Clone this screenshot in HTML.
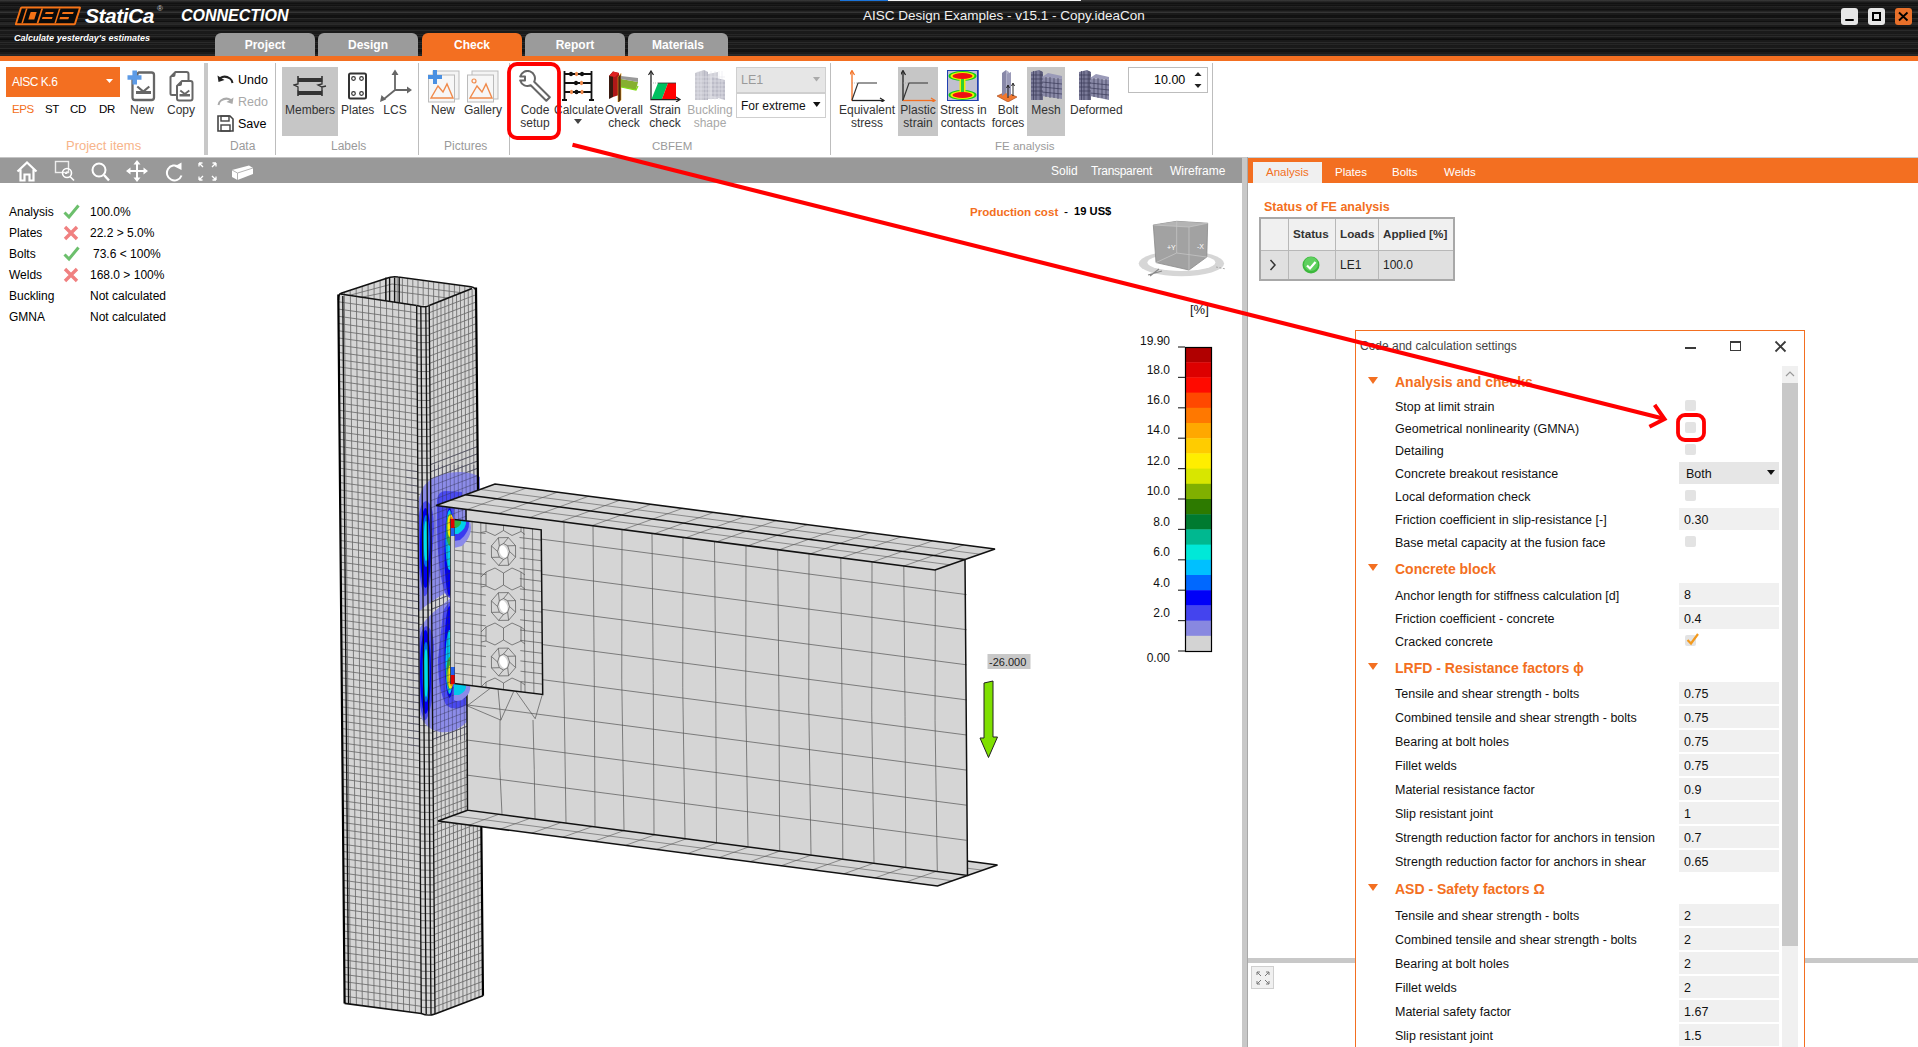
<!DOCTYPE html>
<html><head><meta charset="utf-8">
<style>
*{box-sizing:border-box;margin:0;padding:0}
html,body{width:1918px;height:1047px;overflow:hidden;background:#fff;font-family:"Liberation Sans",sans-serif;color:#000}
.a{position:absolute}
.t{position:absolute;white-space:nowrap;line-height:1}
#title{left:0;top:0;width:1918px;height:56px;background-color:#1a1a1a;
background-image:
repeating-linear-gradient(180deg,rgba(255,255,255,0.07) 0px,rgba(255,255,255,0.07) 1px,rgba(0,0,0,0) 1px,rgba(0,0,0,0) 3px,rgba(0,0,0,0.35) 3px,rgba(0,0,0,0.35) 4px,rgba(0,0,0,0) 4px,rgba(0,0,0,0) 6px),
repeating-linear-gradient(180deg,rgba(255,255,255,0.05) 0px,rgba(255,255,255,0.05) 2px,rgba(0,0,0,0) 2px,rgba(0,0,0,0) 5px,rgba(0,0,0,0.3) 5px,rgba(0,0,0,0.3) 7px,rgba(0,0,0,0) 7px,rgba(0,0,0,0) 11px)}
.tab{position:absolute;top:33px;width:100px;height:23px;background:#9b9b9b;border-radius:6px 6px 0 0;color:#fff;font-weight:bold;font-size:12px;text-align:center;line-height:24px}
.tab.on{background:#f36f21}
.lbl{position:absolute;font-size:12px;color:#333;white-space:nowrap;line-height:12px;text-align:center}
.grp{position:absolute;top:140px;font-size:12px;color:#9a9a9a;white-space:nowrap;line-height:12px}
.sep{position:absolute;top:63px;width:1px;height:92px;background:#bdbdbd}
.hl{position:absolute;top:67px;height:69px;background:#c6c6c6}
.st{position:absolute;font-size:12px;line-height:13px;white-space:nowrap}
.row{position:absolute;left:1395px;font-size:12.5px;line-height:13px;white-space:nowrap;color:#111}
.inp{position:absolute;left:1679px;width:100px;height:22px;background:#f0f0f0;font-size:12.5px;line-height:24px;padding-left:5px;color:#111}
.chk{position:absolute;left:1685px;width:11px;height:11px;background:#e3e3e3;border-radius:2px}
.hdr{position:absolute;left:1395px;font-size:14px;font-weight:bold;color:#f36f21;line-height:14px;white-space:nowrap}
.tri{position:absolute;left:1368px;width:0;height:0;border-left:5px solid transparent;border-right:5px solid transparent;border-top:7px solid #f36f21}
</style></head><body>
<div id="title" class="a"></div>
<div class="a" style="left:840px;top:0;width:48px;height:1px;background:#1a73d9"></div>
<div class="a" style="left:888px;top:0;width:193px;height:1px;background:#f4f4f4"></div>
<!-- logo -->
<svg class="a" style="left:12px;top:4px" width="74" height="24" viewBox="0 0 74 24">
 <g transform="translate(8.4,2.6) skewX(-17.5)">
  <rect x="0" y="0" width="61" height="18.7" rx="1.5" fill="#f47216"/>
  <rect x="2" y="2" width="57" height="14.7" fill="#0a0a0a"/>
  <rect x="6.2" y="2" width="1.6" height="14.7" fill="#f47216"/>
  <rect x="21.5" y="2" width="1.8" height="14.7" fill="#f47216"/>
  <rect x="12" y="5.5" width="6" height="7.5" fill="#f47216"/>
  <rect x="27" y="5.5" width="8" height="2" fill="#f47216"/>
  <rect x="25.5" y="10.5" width="10" height="2" fill="#f47216"/>
  <rect x="39.2" y="2" width="1.6" height="14.7" fill="#f47216"/>
  <rect x="44" y="5.5" width="11" height="2" fill="#f47216"/>
  <rect x="43" y="10.5" width="9" height="2.2" fill="#f47216"/>
 </g>
</svg>
<div class="t" id="statica" style="left:85px;top:5px;font-size:21px;font-weight:bold;font-style:italic;color:#fff;letter-spacing:-0.5px">StatiCa</div>
<div class="t" style="left:157px;top:5px;font-size:8px;color:#ccc">®</div>
<div class="t" id="conn" style="left:181px;top:8px;font-size:16px;font-weight:bold;font-style:italic;color:#fff;transform-origin:0 0;transform:scaleX(1.0)">CONNECTION</div>
<div class="t" id="tag" style="left:14px;top:33px;font-size:9.5px;font-weight:bold;font-style:italic;color:#fff;transform-origin:0 0;transform:scaleX(0.95)">Calculate yesterday's estimates</div>
<div class="t" id="ttl" style="left:863px;top:9px;font-size:13.5px;color:#f0f0f0">AISC Design Examples - v15.1 - Copy.ideaCon</div>
<!-- window buttons -->
<div class="a" style="left:1841px;top:8px;width:17px;height:17px;background:#e6e6e6;border-radius:3px"></div>
<div class="a" style="left:1845px;top:19px;width:9px;height:2px;background:#000;border-radius:1px"></div>
<div class="a" style="left:1868px;top:8px;width:17px;height:17px;background:#e6e6e6;border-radius:3px"></div>
<div class="a" style="left:1872px;top:12px;width:9px;height:9px;border:2px solid #000"></div>
<div class="a" style="left:1895px;top:8px;width:17px;height:17px;background:#e8702a;border-radius:3px"></div>
<svg class="a" style="left:1895px;top:8px" width="17" height="17"><path d="M4 4.5L12.5 12.5M12.5 4.5L4 12.5" stroke="#000" stroke-width="1.8"/></svg>
<!-- tabs -->
<div class="tab" style="left:215px">Project</div>
<div class="tab" style="left:318px">Design</div>
<div class="tab on" style="left:422px">Check</div>
<div class="tab" style="left:525px">Report</div>
<div class="tab" style="left:628px">Materials</div>
<div class="a" style="left:0;top:56px;width:1918px;height:5px;background:#f36f21"></div>
<!-- ribbon bottom strip -->
<div class="a" style="left:0;top:157px;width:1242px;height:26px;background:#999"></div>
<!-- Project items group -->
<div class="a" style="left:6px;top:67px;width:114px;height:30px;background:#f36f21"></div>
<div class="t" style="left:12px;top:76px;font-size:12px;color:#fff;letter-spacing:-0.5px">AISC K.6</div>
<svg class="a" style="left:106px;top:79px" width="8" height="5"><path d="M0 0H7L3.5 4Z" fill="#fff"/></svg>
<div class="t" style="left:12px;top:104px;font-size:11.5px;letter-spacing:-0.4px;color:#f36f21">EPS</div>
<div class="t" style="left:45px;top:104px;font-size:11.5px;letter-spacing:-0.4px">ST</div>
<div class="t" style="left:70px;top:104px;font-size:11.5px;letter-spacing:-0.4px">CD</div>
<div class="t" style="left:99px;top:104px;font-size:11.5px;letter-spacing:-0.4px">DR</div>
<svg class="a" style="left:120px;top:62px" width="40" height="42" viewBox="120 62 40 42">
 <path d="M138.5 72.5H151.5Q154 72.5 154 75V97.5Q154 100 151.5 100H135Q132.5 100 132.5 97.5V78.5Z" fill="none" stroke="#666" stroke-width="2.3" stroke-linejoin="round"/>
 <path d="M132.5 78.5L138.5 72.5V76Q138.5 78.5 136 78.5Z" fill="#666"/>
 <path d="M137.3 86.5L143.3 91.5L149.3 86.5" fill="none" stroke="#666" stroke-width="2.2"/>
 <rect x="136" y="91" width="15" height="3" fill="#666"/>
 <path d="M134.7 70.5V84.5M127.5 77.5H141.5" stroke="#5d9be6" stroke-width="4.6"/>
</svg>
<div class="lbl" style="left:127px;top:104px;width:30px">New</div>
<svg class="a" style="left:165px;top:66px" width="32" height="38" viewBox="165 66 32 38">
 <path d="M175.5 72H186.5Q188.5 72 188.5 74V95H172Q170.5 95 170.5 93.5V77Z" fill="none" stroke="#666" stroke-width="2" stroke-linejoin="round"/>
 <path d="M170.5 77L175.5 72V75Q175.5 77 173.5 77Z" fill="#666"/>
 <path d="M182 81H190.5Q192.5 81 192.5 83V98.5Q192.5 100.5 190.5 100.5H179Q177 100.5 177 98.5V86Z" fill="#fff" stroke="#666" stroke-width="2" stroke-linejoin="round"/>
 <path d="M177 86L182 81V84Q182 86 180 86Z" fill="#666"/>
 <path d="M180.3 90.5L184.8 94L189.3 90.5" fill="none" stroke="#666" stroke-width="1.8"/>
 <rect x="179.5" y="94" width="10.5" height="2.5" fill="#666"/>
</svg>
<div class="lbl" style="left:163px;top:104px;width:36px">Copy</div>
<div class="grp" style="left:66px;color:#f7b48a;font-size:13px">Project items</div>
<div class="a" style="left:204px;top:63px;width:4px;height:92px;background:#c8c8c8"></div>
<!-- Data -->
<svg class="a" style="left:217px;top:74px" width="17" height="12" viewBox="0 0 17 12"><path d="M3 4Q8 1 13 4.5Q15 6 15.5 9" fill="none" stroke="#222" stroke-width="2"/><path d="M0.5 1.5L1.5 8L7.5 6Z" fill="#222"/></svg>
<div class="t" style="left:238px;top:74px;font-size:12.5px">Undo</div>
<svg class="a" style="left:217px;top:96px" width="17" height="12" viewBox="0 0 17 12"><path d="M14 4Q9 1 4 4.5Q2 6 1.5 9" fill="none" stroke="#aaa" stroke-width="2"/><path d="M16.5 1.5L15.5 8L9.5 6Z" fill="#aaa"/></svg>
<div class="t" style="left:238px;top:96px;font-size:12.5px;color:#a8a8a8">Redo</div>
<svg class="a" style="left:217px;top:115px" width="17" height="17" viewBox="0 0 17 17"><path d="M1 1H13L16 4V16H1Z" fill="none" stroke="#444" stroke-width="1.6"/><rect x="4" y="1" width="8" height="5" fill="none" stroke="#444" stroke-width="1.4"/><rect x="4" y="10" width="9" height="6" fill="none" stroke="#444" stroke-width="1.4"/></svg>
<div class="t" style="left:238px;top:118px;font-size:12.5px">Save</div>
<div class="grp" style="left:230px">Data</div>
<div class="sep" style="left:275px"></div>
<!-- Labels -->
<div class="hl" style="left:282px;width:56px"></div>
<svg class="a" style="left:293px;top:75px" width="34" height="22" viewBox="0 0 34 22">
 <rect x="5" y="3" width="24" height="4" fill="#333"/><rect x="5" y="16" width="24" height="4" fill="#333"/>
 <path d="M5 1V7M29 1V7M5 15V21M29 15V21" stroke="#333" stroke-width="1.6"/>
 <path d="M5 7V9L1 10L5 12V15M29 7V9L25 10L29 12L33 11M29 12V15" fill="none" stroke="#333" stroke-width="1.3"/>
</svg>
<div class="lbl" style="left:282px;top:104px;width:56px;color:#333">Members</div>
<svg class="a" style="left:347px;top:72px" width="21" height="28" viewBox="0 0 21 28">
 <rect x="2" y="1.5" width="17" height="25" rx="1.5" fill="none" stroke="#333" stroke-width="2"/>
 <circle cx="6.5" cy="6.5" r="1.8" fill="none" stroke="#333" stroke-width="1.2"/><circle cx="14.5" cy="6.5" r="1.8" fill="none" stroke="#333" stroke-width="1.2"/>
 <circle cx="6.5" cy="21.5" r="1.8" fill="none" stroke="#333" stroke-width="1.2"/><circle cx="14.5" cy="21.5" r="1.8" fill="none" stroke="#333" stroke-width="1.2"/>
</svg>
<div class="lbl" style="left:341px;top:104px;width:32px">Plates</div>
<svg class="a" style="left:378px;top:69px" width="34" height="33" viewBox="0 0 34 33">
 <path d="M17 5V21H30M17 21L6 30" fill="none" stroke="#666" stroke-width="1.8"/>
 <path d="M13.5 6L17 0.5L20.5 6Z M29 17.5L34 21L29 24.5Z M2 33L3.5 26L8 30.5Z" fill="#666"/>
</svg>
<div class="lbl" style="left:380px;top:104px;width:30px">LCS</div>
<div class="grp" style="left:331px">Labels</div>
<div class="sep" style="left:418px"></div>
<!-- Pictures -->
<svg class="a" style="left:427px;top:69px" width="33" height="34" viewBox="0 0 33 34">
 <rect x="6" y="2" width="26" height="28" fill="#f4f4f4" stroke="#bbb" stroke-width="1"/>
 <rect x="1.5" y="6" width="26" height="27" fill="#f7f7f7" stroke="#bbb" stroke-width="1"/>
 <path d="M4 29L11 17L16 23L20 15L26 29Z" fill="none" stroke="#f08a4b" stroke-width="1.4"/>
 <path d="M8 1V15M1 8H15" stroke="#4a90e2" stroke-width="4"/>
</svg>
<div class="lbl" style="left:428px;top:104px;width:30px">New</div>
<svg class="a" style="left:466px;top:69px" width="34" height="34" viewBox="0 0 34 34">
 <rect x="6" y="2" width="26" height="28" fill="#f4f4f4" stroke="#bbb" stroke-width="1"/>
 <rect x="1.5" y="6" width="26" height="27" fill="#f7f7f7" stroke="#bbb" stroke-width="1"/>
 <path d="M4 29L11 17L16 23L20 15L26 29Z" fill="none" stroke="#f08a4b" stroke-width="1.4"/>
 <circle cx="8" cy="12" r="2" fill="none" stroke="#f08a4b" stroke-width="1.2"/>
</svg>
<div class="lbl" style="left:464px;top:104px;width:38px">Gallery</div>
<div class="grp" style="left:444px">Pictures</div>
<div class="sep" style="left:509px"></div>
<!-- CBFEM -->
<svg class="a" style="left:518px;top:70px" width="34" height="33" viewBox="0 0 34 33">
 <path d="M12.7,15.2A7.5,7.5 0 0 1 2.2,10.5L7,10.5L7,6.5L2.2,6.5A7.5,7.5 0 1 1 16.2,11.7L31.8,27.2L28.3,30.8Z" fill="none" stroke="#666" stroke-width="2" stroke-linejoin="round"/>
</svg>
<div class="lbl" style="left:518px;top:104px;width:34px;line-height:12.5px">Code<br>setup</div>
<svg class="a" style="left:562px;top:70px" width="32" height="32" viewBox="0 0 32 32">
 <path d="M2.5 1V30M29.5 1V30M0 30H5M27 30H32M2.5 4H29.5M2.5 13H29.5M2.5 22H29.5" stroke="#111" stroke-width="1.8"/>
 <ellipse cx="9" cy="4" rx="2" ry="2.2" fill="#111"/><ellipse cx="14.5" cy="4" rx="1.5" ry="2.2" fill="#f08a4b"/><ellipse cx="20" cy="4" rx="2" ry="2.2" fill="#111"/>
 <ellipse cx="14" cy="13" rx="2" ry="2.2" fill="#111"/><ellipse cx="19.5" cy="13" rx="1.5" ry="2.2" fill="#f08a4b"/>
 <ellipse cx="9.5" cy="22" rx="1.5" ry="2.2" fill="#f08a4b"/><ellipse cx="14.5" cy="22" rx="2" ry="2.2" fill="#111"/><ellipse cx="20" cy="22" rx="1.5" ry="2.2" fill="#f08a4b"/>
</svg>
<div class="lbl" style="left:553px;top:104px;width:52px">Calculate</div>
<svg class="a" style="left:574px;top:119px" width="8" height="6"><path d="M0 0H8L4 5Z" fill="#444"/></svg>
<svg class="a" style="left:608px;top:70px" width="32" height="32" viewBox="0 0 32 32">
 <path d="M1 6L5 1.5V27L1 29Z" fill="#3a1a10"/>
 <path d="M5 1.5L11 3V25L5 27Z" fill="#b01818"/>
 <path d="M1 6L5 1.5L11 3L7 7Z" fill="#e02020"/>
 <path d="M10 7L13 3.5V30L10 33Z" fill="#4a2a10" stroke="#e8a020" stroke-width="0.6"/>
 <path d="M13 9L30 12L28 20L13 17Z" fill="#86b030"/>
 <path d="M13 6L30 8L30 12L13 9Z" fill="#999"/>
 <path d="M13 17L28 20L30 16" fill="none" stroke="#7fdd10" stroke-width="1.2"/>
</svg>
<div class="lbl" style="left:604px;top:104px;width:40px;line-height:12.5px">Overall<br>check</div>
<svg class="a" style="left:648px;top:70px" width="34" height="32" viewBox="0 0 34 32">
 <path d="M3 2V29.5H31" fill="none" stroke="#222" stroke-width="1.3"/>
 <path d="M0.5 5L3 1L5.5 5M28 27L32 29.5L28 32" fill="none" stroke="#222" stroke-width="1.2"/>
 <path d="M3.5 29L10 13H20L14 29Z" fill="#00c060"/>
 <path d="M14 29L20 13H28L28 29Z" fill="#ff0000"/>
 <path d="M10 13H28" stroke="#333" stroke-width="0.8"/>
 <path d="M3 13H10" stroke="#888" stroke-width="0.6" stroke-dasharray="1 1"/>
</svg>
<div class="lbl" style="left:646px;top:104px;width:38px;line-height:12.5px">Strain<br>check</div>
<svg class="a" style="left:694px;top:69px" width="33" height="32" viewBox="0 0 33 32">
 <path d="M1 4L10 1V31H1Z" fill="#c8c8d0"/>
 <path d="M10 1L14 3V31H10Z" fill="#b8b8c4"/>
 <path d="M14 5L24 3V30H14Z" fill="#d0d0d8"/>
 <path d="M18 8L31 11V31L18 27Z" fill="#bcbcc8"/>
 <g stroke="#e8e8ee" stroke-width="0.6"><path d="M1 8H31M1 12H31M1 16H31M1 20H31M1 24H31M1 28H31M4 2V31M7 2V31M12 2V31M17 2V31M21 2V31M25 2V31M28 2V31"/></g>
</svg>
<div class="lbl" style="left:686px;top:104px;width:48px;line-height:12.5px;color:#a8a8a8">Buckling<br>shape</div>
<div class="a" style="left:736px;top:67px;width:90px;height:26px;background:#e6e6e6;border:1px solid #cfcfcf"></div>
<div class="t" style="left:741px;top:74px;font-size:12.5px;color:#9a9a9a">LE1</div>
<svg class="a" style="left:813px;top:77px" width="8" height="5"><path d="M0 0H7L3.5 4.5Z" fill="#aaa"/></svg>
<div class="a" style="left:736px;top:93px;width:90px;height:25px;background:#fff;border:1px solid #cfcfcf"></div>
<div class="t" style="left:741px;top:100px;font-size:12px;color:#111">For extreme</div>
<svg class="a" style="left:813px;top:102px" width="8" height="6"><path d="M0 0H7.5L3.75 5Z" fill="#111"/></svg>
<div class="grp" style="left:652px;font-size:11.5px">CBFEM</div>
<div class="sep" style="left:830px"></div>
<!-- FE analysis -->
<svg class="a" style="left:850px;top:70px" width="36" height="32" viewBox="0 0 36 32">
 <path d="M2 31V2" stroke="#f36f21" stroke-width="1.3"/><path d="M-0.5 5L2 0.5L4.5 5" fill="none" stroke="#f36f21" stroke-width="1.2"/>
 <path d="M2 30.5H34" stroke="#222" stroke-width="1.3"/><path d="M30 28L34 30.5L30 33" fill="none" stroke="#222" stroke-width="1.2"/>
 <path d="M2 30L8 13H27" fill="none" stroke="#333" stroke-width="1.2"/>
 <path d="M2 13H8" stroke="#999" stroke-width="0.6" stroke-dasharray="1 1"/>
</svg>
<div class="lbl" style="left:837px;top:104px;width:60px;line-height:12.5px">Equivalent<br>stress</div>
<div class="hl" style="left:898px;width:40px"></div>
<svg class="a" style="left:901px;top:70px" width="36" height="32" viewBox="0 0 36 32">
 <path d="M2 31V2" stroke="#222" stroke-width="1.3"/><path d="M-0.5 5L2 0.5L4.5 5" fill="none" stroke="#222" stroke-width="1.2"/>
 <path d="M2 30.5H34" stroke="#f36f21" stroke-width="1.3"/><path d="M30 28L34 30.5L30 33" fill="none" stroke="#f36f21" stroke-width="1.2"/>
 <path d="M2 30L8 13H27" fill="none" stroke="#333" stroke-width="1.2"/>
 <path d="M2 13H8" stroke="#999" stroke-width="0.6" stroke-dasharray="1 1"/>
</svg>
<div class="lbl" style="left:898px;top:104px;width:40px;line-height:12.5px;color:#333">Plastic<br>strain</div>
<svg class="a" style="left:947px;top:70px" width="32" height="31" viewBox="0 0 32 31">
 <rect x="0" y="0" width="31" height="31" fill="#2040b0"/>
 <rect x="1" y="1" width="29" height="29" fill="#c0c0d0"/>
 <ellipse cx="15.5" cy="6" rx="14" ry="5" fill="#10d010"/><ellipse cx="15.5" cy="6" rx="12" ry="4" fill="#f0f000"/><ellipse cx="15.5" cy="6" rx="10" ry="3" fill="#f01010"/>
 <ellipse cx="15.5" cy="25" rx="14" ry="5" fill="#10d010"/><ellipse cx="15.5" cy="25" rx="12" ry="4" fill="#f0f000"/><ellipse cx="15.5" cy="25" rx="10" ry="3" fill="#f01010"/>
 <rect x="12.5" y="9" width="6" height="13" fill="#f0f000"/><rect x="14" y="9" width="3" height="13" fill="#30d030"/>
 <path d="M0 0H31V31H0Z" fill="none" stroke="#2040b0" stroke-width="1.5"/>
</svg>
<div class="lbl" style="left:940px;top:104px;width:46px;line-height:12.5px">Stress in<br>contacts</div>
<svg class="a" style="left:996px;top:69px" width="22" height="33" viewBox="0 0 22 33">
 <path d="M1 27L12 33L21 28L10 23Z" fill="#f07830" stroke="#a04010" stroke-width="0.6"/>
 <path d="M6 4L10 1V24L6 27Z" fill="#8888a8"/><path d="M10 1L13 3V26L10 24Z" fill="#b0b0c8"/>
 <path d="M11 5L15 3V26L11 28Z" fill="#9a9ab8"/>
 <path d="M12 29V17M10.5 19L12 16L13.5 19M17 27V15M15.5 17L17 14L18.5 17" fill="none" stroke="#111" stroke-width="0.9"/>
</svg>
<div class="lbl" style="left:990px;top:104px;width:36px;line-height:12.5px">Bolt<br>forces</div>
<div class="hl" style="left:1027px;width:38px"></div>
<svg class="a" style="left:1030px;top:69px" width="33" height="32" viewBox="0 0 33 32">
 <path d="M1 3L9 1V31H1Z" fill="#7a7a98"/><path d="M9 1L13 3V31H9Z" fill="#6a6a88"/>
 <path d="M12 8L32 10V30L12 27Z" fill="#8a8aa8"/><path d="M12 8L18 4L32 7V10Z" fill="#9a9ab8"/>
 <g stroke="#3a3a58" stroke-width="0.7"><path d="M1 6H13M1 10H13M1 14H13M1 18H13M1 22H13M1 26H13M3.5 2V31M6 2V31M11 2V31M12 13L32 15M12 18L32 20M12 23L32 25M16 8V28M20 8V29M24 9V29M28 9V30"/></g>
</svg>
<div class="lbl" style="left:1027px;top:104px;width:38px;color:#333">Mesh</div>
<svg class="a" style="left:1078px;top:69px" width="33" height="32" viewBox="0 0 33 32">
 <path d="M1 3L9 1V31H1Z" fill="#7a7a98"/><path d="M9 1L13 3V31H9Z" fill="#6a6a88"/>
 <path d="M12 9L31 11V31L12 27Z" fill="#8a8aa8"/><path d="M12 9L18 5L31 8V11Z" fill="#9a9ab8"/>
 <g stroke="#3a3a58" stroke-width="0.7"><path d="M1 6H13M1 10H13M1 14H13M1 18H13M1 22H13M1 26H13M3.5 2V31M6 2V31M11 2V31M12 14L31 16M12 19L31 21M12 24L31 26M16 9V28M20 9V29M24 10V29M28 10V30"/></g>
</svg>
<div class="lbl" style="left:1070px;top:104px;width:48px">Deformed</div>
<div class="a" style="left:1128px;top:67px;width:80px;height:26px;background:#fff;border:1px solid #bdbdbd"></div>
<div class="t" style="left:1154px;top:74px;font-size:12.5px">10.00</div>
<svg class="a" style="left:1194px;top:71px" width="8" height="18"><path d="M0.5 5L4 1L7.5 5Z M0.5 13L4 17L7.5 13Z" fill="#222"/></svg>
<div class="grp" style="left:995px;font-size:11.5px">FE analysis</div>
<div class="sep" style="left:1212px"></div>
<!-- viewport toolbar icons -->
<div class="a" style="left:0;top:157px;width:1242px;height:1px;background:#c4c4c4"></div>
<svg class="a" style="left:16px;top:160px" width="240" height="22" viewBox="0 0 240 22">
 <g fill="none" stroke="#fff" stroke-width="2">
  <path d="M1.5 11.5L11 2.5L20.5 11.5M4.5 9.5V20.5H8.5V14.5H13.5V20.5H17.5V9.5" stroke-width="2.2"/>
  <rect x="39.5" y="1.5" width="13" height="11" stroke-width="1.4" stroke="#eee"/>
  <circle cx="51" cy="13" r="4.5" stroke-width="1.6"/><path d="M54 16.5L58 20.5" stroke-width="1.6"/>
  <path d="M51 11V13.5H49" stroke-width="1"/>
  <circle cx="83" cy="10" r="6.5"/><path d="M88 15L93 20.5" stroke-width="2.4"/>
  <path d="M121 2V20M112 11H130" stroke-width="2"/>
 </g>
 <path d="M121 0L117.5 4.5H124.5Z M121 22L117.5 17.5H124.5Z M110 11L114.5 7.5V14.5Z M132 11L127.5 7.5V14.5Z" fill="#fff"/>
 <path d="M163 7A7.5 7.5 0 1 0 165.5 15.5" fill="none" stroke="#fff" stroke-width="2"/>
 <path d="M158.5 6.5L165.5 2.5L165.5 10Z" fill="#fff"/>
 <g fill="none" stroke="#fff" stroke-width="1.3">
  <path d="M183 3L187 7M183 3V6.5M183 3H186.5"/><path d="M200 3L196 7M200 3V6.5M200 3H196.5"/>
  <path d="M183 20L187 16M183 20V16.5M183 20H186.5"/><path d="M200 20L196 16M200 20V16.5M200 20H196.5"/>
 </g>
 <path d="M216 10L233 5.5L237 8V14L221.5 20L216 17Z" fill="#fff"/>
 <path d="M216 10L221.5 13V20M221.5 13L237 8" fill="none" stroke="#aaa" stroke-width="0.9"/>
</svg>
<div class="t" style="left:1051px;top:165px;font-size:12px;color:#fff">Solid</div>
<div class="t" style="left:1091px;top:165px;font-size:12px;color:#fff;letter-spacing:-0.3px">Transparent</div>
<div class="t" style="left:1170px;top:165px;font-size:12px;color:#fff">Wireframe</div>
<!-- splitter -->
<div class="a" style="left:1242px;top:157px;width:6px;height:890px;background:#c8c8c8;border-right:1px solid #a8a8a8"></div>
<!-- status list -->
<div class="st" style="left:9px;top:206px">Analysis</div>
<div class="st" style="left:9px;top:227px">Plates</div>
<div class="st" style="left:9px;top:248px">Bolts</div>
<div class="st" style="left:9px;top:269px">Welds</div>
<div class="st" style="left:9px;top:290px">Buckling</div>
<div class="st" style="left:9px;top:311px">GMNA</div>
<svg class="a" style="left:63px;top:204px" width="17" height="112" viewBox="0 0 17 112">
 <path d="M1.5 8.5L6 13L15.5 1.5" fill="none" stroke="#6cbf6c" stroke-width="3"/>
 <path d="M2 23L14 35M14 23L2 35" stroke="#f08080" stroke-width="3.4"/>
 <path d="M1.5 50.5L6 55L15.5 43.5" fill="none" stroke="#6cbf6c" stroke-width="3"/>
 <path d="M2 65L14 77M14 65L2 77" stroke="#f08080" stroke-width="3.4"/>
</svg>
<div class="st" style="left:90px;top:206px">100.0%</div>
<div class="st" style="left:90px;top:227px">22.2 &gt; 5.0%</div>
<div class="st" style="left:93px;top:248px">73.6 &lt; 100%</div>
<div class="st" style="left:90px;top:269px">168.0 &gt; 100%</div>
<div class="st" style="left:90px;top:290px">Not calculated</div>
<div class="st" style="left:90px;top:311px">Not calculated</div>
<!-- production cost -->
<div class="t" style="left:970px;top:206px;font-size:11.6px;font-weight:bold;color:#f36f21">Production cost</div>
<div class="t" style="left:1064px;top:206px;font-size:12px">-</div>
<div class="t" style="left:1074px;top:206px;font-size:11.2px;font-weight:bold">19 US$</div>
<!-- nav cube -->
<svg class="a" style="left:1136px;top:218px" width="94" height="62" viewBox="0 0 94 62">
 <ellipse cx="45.4" cy="45.5" rx="42.7" ry="12.7" fill="#d6d6d6"/>
 <ellipse cx="45.4" cy="44.5" rx="34" ry="8.5" fill="#fff"/>
 <path d="M17.3 7L40.7 3.3L71.7 5.2L70.8 39L53 52L20 44.6Z" fill="#a2a2a2" stroke="#8a8a8a" stroke-width="0.8"/>
 <path d="M17.3 7L40.7 3.3L71.7 5.2L53 9Z" fill="#b4b4b4"/>
 <path d="M53 9V52M17.3 7L53 9L71.7 5.2M40.7 3.3V35M20 44.6L40.7 35L70.8 39" fill="none" stroke="#c4c4c4" stroke-width="0.8"/>
 <text x="31" y="32" font-size="7" fill="#fff" font-family="Liberation Sans">+Y</text>
 <text x="61" y="31" font-size="7" fill="#fff" font-family="Liberation Sans">-X</text>
 <path d="M14 58L23 51M12 57L26 53" stroke="#888" stroke-width="1.2"/>
 <path d="M80 49L90 51" stroke="#999" stroke-width="0.8" stroke-dasharray="2 1.5"/>
</svg>
<!-- legend -->
<div class="t" style="left:1190px;top:303px;font-size:13px;color:#111">[%]</div>
<div id="legend"></div>
<svg class="a" style="left:1170px;top:340px" width="50" height="320" viewBox="1170 340 50 320">
<rect x="1185" y="347.00" width="27" height="15.60" fill="#b00000"/>
<rect x="1185" y="362.20" width="27" height="15.60" fill="#dd0000"/>
<rect x="1185" y="377.40" width="27" height="15.60" fill="#ff0a00"/>
<rect x="1185" y="392.60" width="27" height="15.60" fill="#ff4800"/>
<rect x="1185" y="407.80" width="27" height="15.60" fill="#ff7800"/>
<rect x="1185" y="423.00" width="27" height="15.60" fill="#ffa800"/>
<rect x="1185" y="438.20" width="27" height="15.60" fill="#ffcc00"/>
<rect x="1185" y="453.40" width="27" height="15.60" fill="#ffee00"/>
<rect x="1185" y="468.60" width="27" height="15.60" fill="#d8e600"/>
<rect x="1185" y="483.80" width="27" height="15.60" fill="#80b000"/>
<rect x="1185" y="499.00" width="27" height="15.60" fill="#2d7a00"/>
<rect x="1185" y="514.20" width="27" height="15.60" fill="#007a30"/>
<rect x="1185" y="529.40" width="27" height="15.60" fill="#00b890"/>
<rect x="1185" y="544.60" width="27" height="15.60" fill="#00e8d8"/>
<rect x="1185" y="559.80" width="27" height="15.60" fill="#00c0ff"/>
<rect x="1185" y="575.00" width="27" height="15.60" fill="#0068ff"/>
<rect x="1185" y="590.20" width="27" height="15.60" fill="#0000f8"/>
<rect x="1185" y="605.40" width="27" height="15.60" fill="#4444ee"/>
<rect x="1185" y="620.60" width="27" height="15.60" fill="#8888e0"/>
<rect x="1185" y="635.80" width="27" height="15.60" fill="#d3d3d3"/>
<rect x="1185.5" y="347.5" width="26" height="304" fill="none" stroke="#000" stroke-width="1.2"/>
<path d="M1178 347.0H1185" stroke="#333" stroke-width="1.2"/>
<path d="M1178 377.4H1185" stroke="#333" stroke-width="1.2"/>
<path d="M1178 407.8H1185" stroke="#333" stroke-width="1.2"/>
<path d="M1178 438.2H1185" stroke="#333" stroke-width="1.2"/>
<path d="M1178 468.6H1185" stroke="#333" stroke-width="1.2"/>
<path d="M1178 499.0H1185" stroke="#333" stroke-width="1.2"/>
<path d="M1178 529.4H1185" stroke="#333" stroke-width="1.2"/>
<path d="M1178 559.8H1185" stroke="#333" stroke-width="1.2"/>
<path d="M1178 590.2H1185" stroke="#333" stroke-width="1.2"/>
<path d="M1178 620.6H1185" stroke="#333" stroke-width="1.2"/>
<path d="M1178 651.0H1185" stroke="#333" stroke-width="1.2"/>
</svg>
<div class="t" style="left:1100px;width:70px;text-align:right;top:335px;font-size:12px;color:#111">19.90</div>
<div class="t" style="left:1100px;width:70px;text-align:right;top:364px;font-size:12px;color:#111">18.0</div>
<div class="t" style="left:1100px;width:70px;text-align:right;top:394px;font-size:12px;color:#111">16.0</div>
<div class="t" style="left:1100px;width:70px;text-align:right;top:424px;font-size:12px;color:#111">14.0</div>
<div class="t" style="left:1100px;width:70px;text-align:right;top:455px;font-size:12px;color:#111">12.0</div>
<div class="t" style="left:1100px;width:70px;text-align:right;top:485px;font-size:12px;color:#111">10.0</div>
<div class="t" style="left:1100px;width:70px;text-align:right;top:516px;font-size:12px;color:#111">8.0</div>
<div class="t" style="left:1100px;width:70px;text-align:right;top:546px;font-size:12px;color:#111">6.0</div>
<div class="t" style="left:1100px;width:70px;text-align:right;top:577px;font-size:12px;color:#111">4.0</div>
<div class="t" style="left:1100px;width:70px;text-align:right;top:607px;font-size:12px;color:#111">2.0</div>
<div class="t" style="left:1100px;width:70px;text-align:right;top:652px;font-size:12px;color:#111">0.00</div>
<svg class="a" style="left:0;top:183px" width="1242" height="864" viewBox="0 183 1242 864">
<polygon points="338.3,294.6 392.0,277.0 476.0,287.5 429.2,305.5 416.7,305.5" fill="#d5d5d5" stroke="none" stroke-width="0" />
<polygon points="338.3,294.6 416.7,305.5 422.0,306.8 426.0,306.8 429.2,305.5 476.0,287.5 483.0,995.8 435.0,1014.0 430.0,1015.0 425.0,1015.0 421.3,1013.5 344.6,1003.4" fill="#d5d5d5" stroke="none" stroke-width="0" />
<defs><clipPath id="innerclip"><polygon points="338.3,294.6 392,277 476,287.5 429.2,305.5 416.7,305.5"/></clipPath></defs>
<path d="M344.3,292.6L344.3,295.4M350.2,290.7L350.2,296.3M356.2,288.7L356.2,297.1M362.2,286.8L362.2,297.9M368.1,284.8L368.1,298.7M374.1,282.9L374.1,299.6M380.1,280.9L380.1,300.4M386.0,279.0L386.0,301.2M397.2,277.6L397.2,302.8M402.4,278.3L402.4,303.5M407.6,278.9L407.6,304.2M412.8,279.6L412.8,305.0M418.0,280.2L418.0,306.0M423.2,280.9L423.2,306.0M428.4,281.6L428.4,306.0M433.6,282.2L433.6,303.8M438.8,282.9L438.8,301.8M444.0,283.5L444.0,299.8M449.2,284.1L449.2,297.8M454.4,284.8L454.4,295.8M459.6,285.4L459.6,293.8M464.8,286.1L464.8,291.8M470.0,286.8L470.0,289.8M346.3,296.2L392.0,284.0M392.0,284.0L470.0,293.8M346.3,300.4L392.0,291.0M392.0,291.0L470.0,300.8" stroke="#6a6a6a" stroke-width="0.85" fill="none" clip-path="url(#innerclip)"/>
<path d="M338.4,301.8L416.7,312.7M338.4,309.1L416.8,319.9M338.5,316.3L416.8,327.2M338.6,323.5L416.9,334.4M338.6,330.8L416.9,341.6M338.7,338.0L417.0,348.8M338.8,345.2L417.0,356.1M338.8,352.5L417.1,363.3M338.9,359.7L417.1,370.5M338.9,366.9L417.2,377.7M339.0,374.2L417.2,385.0M339.1,381.4L417.3,392.2M339.1,388.6L417.3,399.4M339.2,395.9L417.4,406.6M339.3,403.1L417.4,413.9M339.3,410.3L417.5,421.1M339.4,417.6L417.5,428.3M339.5,424.8L417.5,435.5M339.5,432.0L417.6,442.8M339.6,439.3L417.6,450.0M339.7,446.5L417.7,457.2M339.7,453.7L417.7,464.4M339.8,461.0L417.8,471.7M339.8,468.2L417.8,478.9M339.9,475.4L417.9,486.1M340.0,482.6L417.9,493.3M340.0,489.9L418.0,500.6M340.1,497.1L418.0,507.8M340.2,504.3L418.1,515.0M340.2,511.6L418.1,522.2M340.3,518.8L418.2,529.5M340.4,526.0L418.2,536.7M340.4,533.3L418.2,543.9M340.5,540.5L418.3,551.1M340.6,547.7L418.3,558.4M340.6,555.0L418.4,565.6M340.7,562.2L418.4,572.8M340.7,569.4L418.5,580.0M340.8,576.7L418.5,587.3M340.9,583.9L418.6,594.5M340.9,591.1L418.6,601.7M341.0,598.4L418.7,608.9M341.1,605.6L418.7,616.2M341.1,612.8L418.8,623.4M341.2,620.1L418.8,630.6M341.3,627.3L418.9,637.8M341.3,634.5L418.9,645.1M341.4,641.8L419.0,652.3M341.5,649.0L419.0,659.5M341.5,656.2L419.0,666.7M341.6,663.5L419.1,673.9M341.6,670.7L419.1,681.2M341.7,677.9L419.2,688.4M341.8,685.2L419.2,695.6M341.8,692.4L419.3,702.8M341.9,699.6L419.3,710.1M342.0,706.9L419.4,717.3M342.0,714.1L419.4,724.5M342.1,721.3L419.5,731.7M342.2,728.6L419.5,739.0M342.2,735.8L419.6,746.2M342.3,743.0L419.6,753.4M342.4,750.3L419.7,760.6M342.4,757.5L419.7,767.9M342.5,764.7L419.8,775.1M342.5,772.0L419.8,782.3M342.6,779.2L419.8,789.5M342.7,786.4L419.9,796.8M342.7,793.7L419.9,804.0M342.8,800.9L420.0,811.2M342.9,808.1L420.0,818.4M342.9,815.4L420.1,825.7M343.0,822.6L420.1,832.9M343.1,829.8L420.2,840.1M343.1,837.0L420.2,847.3M343.2,844.3L420.3,854.6M343.2,851.5L420.3,861.8M343.3,858.7L420.4,869.0M343.4,866.0L420.4,876.2M343.4,873.2L420.5,883.5M343.5,880.4L420.5,890.7M343.6,887.7L420.5,897.9M343.6,894.9L420.6,905.1M343.7,902.1L420.6,912.4M343.8,909.4L420.7,919.6M343.8,916.6L420.7,926.8M343.9,923.8L420.8,934.0M344.0,931.1L420.8,941.3M344.0,938.3L420.9,948.5M344.1,945.5L420.9,955.7M344.2,952.8L421.0,962.9M344.2,960.0L421.0,970.2M344.3,967.2L421.1,977.4M344.3,974.5L421.1,984.6M344.4,981.7L421.2,991.8M344.5,988.9L421.2,999.1M344.5,996.2L421.3,1006.3M416.7,313.7L429.3,313.7M416.8,320.9L429.3,321.0M416.8,328.2L429.4,328.2M416.9,335.4L429.4,335.4M416.9,342.6L429.5,342.6M417.0,349.8L429.6,349.9M417.0,357.1L429.6,357.1M417.1,364.3L429.7,364.3M417.1,371.5L429.7,371.6M417.2,378.7L429.8,378.8M417.2,386.0L429.9,386.0M417.3,393.2L429.9,393.3M417.3,400.4L430.0,400.5M417.4,407.6L430.0,407.7M417.4,414.9L430.1,414.9M417.5,422.1L430.1,422.2M417.5,429.3L430.2,429.4M417.5,436.5L430.3,436.6M417.6,443.8L430.3,443.9M417.6,451.0L430.4,451.1M417.7,458.2L430.4,458.3M417.7,465.4L430.5,465.6M417.8,472.7L430.6,472.8M417.8,479.9L430.6,480.0M417.9,487.1L430.7,487.2M417.9,494.3L430.7,494.5M418.0,501.6L430.8,501.7M418.0,508.8L430.9,508.9M418.1,516.0L430.9,516.2M418.1,523.2L431.0,523.4M418.2,530.5L431.0,530.6M418.2,537.7L431.1,537.8M418.2,544.9L431.2,545.1M418.3,552.1L431.2,552.3M418.3,559.4L431.3,559.5M418.4,566.6L431.3,566.8M418.4,573.8L431.4,574.0M418.5,581.0L431.4,581.2M418.5,588.3L431.5,588.5M418.6,595.5L431.6,595.7M418.6,602.7L431.6,602.9M418.7,609.9L431.7,610.1M418.7,617.2L431.7,617.4M418.8,624.4L431.8,624.6M418.8,631.6L431.9,631.8M418.9,638.8L431.9,639.1M418.9,646.1L432.0,646.3M419.0,653.3L432.0,653.5M419.0,660.5L432.1,660.8M419.0,667.7L432.2,668.0M419.1,674.9L432.2,675.2M419.1,682.2L432.3,682.4M419.2,689.4L432.3,689.7M419.2,696.6L432.4,696.9M419.3,703.8L432.5,704.1M419.3,711.1L432.5,711.4M419.4,718.3L432.6,718.6M419.4,725.5L432.6,725.8M419.5,732.7L432.7,733.0M419.5,740.0L432.8,740.3M419.6,747.2L432.8,747.5M419.6,754.4L432.9,754.7M419.7,761.6L432.9,762.0M419.7,768.9L433.0,769.2M419.8,776.1L433.0,776.4M419.8,783.3L433.1,783.7M419.8,790.5L433.2,790.9M419.9,797.8L433.2,798.1M419.9,805.0L433.3,805.3M420.0,812.2L433.3,812.6M420.0,819.4L433.4,819.8M420.1,826.7L433.5,827.0M420.1,833.9L433.5,834.3M420.2,841.1L433.6,841.5M420.2,848.3L433.6,848.7M420.3,855.6L433.7,855.9M420.3,862.8L433.8,863.2M420.4,870.0L433.8,870.4M420.4,877.2L433.9,877.6M420.5,884.5L433.9,884.9M420.5,891.7L434.0,892.1M420.5,898.9L434.1,899.3M420.6,906.1L434.1,906.6M420.6,913.4L434.2,913.8M420.7,920.6L434.2,921.0M420.7,927.8L434.3,928.2M420.8,935.0L434.3,935.5M420.8,942.3L434.4,942.7M420.9,949.5L434.5,949.9M420.9,956.7L434.5,957.2M421.0,963.9L434.6,964.4M421.0,971.2L434.6,971.6M421.1,978.4L434.7,978.9M421.1,985.6L434.8,986.1M421.2,992.8L434.8,993.3M421.2,1000.1L434.9,1000.5M421.3,1007.3L434.9,1007.8M344.3,295.4L350.5,1004.2M350.4,296.3L356.4,1005.0M356.4,297.1L362.3,1005.7M362.4,298.0L368.2,1006.5M368.5,298.8L374.1,1007.3M374.5,299.6L380.0,1008.1M380.5,300.5L385.9,1008.8M386.5,301.3L391.8,1009.6M392.6,302.1L397.7,1010.4M398.6,303.0L403.6,1011.2M404.6,303.8L409.5,1011.9M410.7,304.7L415.4,1012.7M429.3,312.7L476.1,294.7M429.3,320.0L476.1,302.0M429.4,327.2L476.2,309.2M429.4,334.4L476.3,316.4M429.5,341.6L476.4,323.6M429.6,348.9L476.4,330.9M429.6,356.1L476.5,338.1M429.7,363.3L476.6,345.3M429.7,370.6L476.6,352.5M429.8,377.8L476.7,359.8M429.9,385.0L476.8,367.0M429.9,392.3L476.9,374.2M430.0,399.5L476.9,381.5M430.0,406.7L477.0,388.7M430.1,413.9L477.1,395.9M430.1,421.2L477.1,403.1M430.2,428.4L477.2,410.4M430.3,435.6L477.3,417.6M430.3,442.9L477.4,424.8M430.4,450.1L477.4,432.1M430.4,457.3L477.5,439.3M430.5,464.6L477.6,446.5M430.6,471.8L477.6,453.7M430.6,479.0L477.7,461.0M430.7,486.2L477.8,468.2M430.7,493.5L477.9,475.4M430.8,500.7L477.9,482.6M430.9,507.9L478.0,489.9M430.9,515.2L478.1,497.1M431.0,522.4L478.1,504.3M431.0,529.6L478.2,511.6M431.1,536.8L478.3,518.8M431.2,544.1L478.4,526.0M431.2,551.3L478.4,533.2M431.3,558.5L478.5,540.5M431.3,565.8L478.6,547.7M431.4,573.0L478.6,554.9M431.4,580.2L478.7,562.1M431.5,587.5L478.8,569.4M431.6,594.7L478.9,576.6M431.6,601.9L478.9,583.8M431.7,609.1L479.0,591.1M431.7,616.4L479.1,598.3M431.8,623.6L479.1,605.5M431.9,630.8L479.2,612.7M431.9,638.1L479.3,620.0M432.0,645.3L479.4,627.2M432.0,652.5L479.4,634.4M432.1,659.8L479.5,641.6M432.2,667.0L479.6,648.9M432.2,674.2L479.6,656.1M432.3,681.4L479.7,663.3M432.3,688.7L479.8,670.6M432.4,695.9L479.9,677.8M432.5,703.1L479.9,685.0M432.5,710.4L480.0,692.2M432.6,717.6L480.1,699.5M432.6,724.8L480.1,706.7M432.7,732.0L480.2,713.9M432.8,739.3L480.3,721.2M432.8,746.5L480.4,728.4M432.9,753.7L480.4,735.6M432.9,761.0L480.5,742.8M433.0,768.2L480.6,750.1M433.0,775.4L480.6,757.3M433.1,782.7L480.7,764.5M433.2,789.9L480.8,771.7M433.2,797.1L480.9,779.0M433.3,804.3L480.9,786.2M433.3,811.6L481.0,793.4M433.4,818.8L481.1,800.7M433.5,826.0L481.1,807.9M433.5,833.3L481.2,815.1M433.6,840.5L481.3,822.3M433.6,847.7L481.4,829.6M433.7,854.9L481.4,836.8M433.8,862.2L481.5,844.0M433.8,869.4L481.6,851.2M433.9,876.6L481.6,858.5M433.9,883.9L481.7,865.7M434.0,891.1L481.8,872.9M434.1,898.3L481.9,880.2M434.1,905.6L481.9,887.4M434.2,912.8L482.0,894.6M434.2,920.0L482.1,901.8M434.3,927.2L482.1,909.1M434.3,934.5L482.2,916.3M434.4,941.7L482.3,923.5M434.5,948.9L482.4,930.8M434.5,956.2L482.4,938.0M434.6,963.4L482.5,945.2M434.6,970.6L482.6,952.4M434.7,977.9L482.6,959.7M434.8,985.1L482.7,966.9M434.8,992.3L482.8,974.1M434.9,999.5L482.9,981.3M434.9,1006.8L482.9,988.6M433.1,304.0L439.0,1012.5M437.0,302.5L443.0,1011.0M440.9,301.0L447.0,1009.5M444.8,299.5L451.0,1007.9M448.7,298.0L455.0,1006.4M452.6,296.5L459.0,1004.9M456.5,295.0L463.0,1003.4M460.4,293.5L467.0,1001.9M464.3,292.0L471.0,1000.3M468.2,290.5L475.0,998.8M472.1,289.0L479.0,997.3" stroke="#6a6a6a" stroke-width="0.85" fill="none"/>
<defs><clipPath id="colclip"><polygon points="418,300 478,280 485,1000 421,1010"/></clipPath></defs>

<g clip-path="url(#colclip)">
<path d="M418.4,612 L418.4,505 Q419,488 430,480 Q445,471 462,472 Q474,473 480,477 L480,540 L455,560 L453,588 Q444,594 434,600 Q425,606 418.4,612Z" fill="#8c8ce8"/>
<path d="M418.4,630 Q426,618 436,610 Q446,602 453,596 L456,690 L467,693 L467,722 Q455,734 440,732 Q420,728 418.4,705Z" fill="#8c8ce8"/>
<path d="M418.4,530 Q418,503 426,501 Q434,503 434,530 L431,575 Q428,598 424,596 Q419,580 418.4,555Z" fill="#4a4af0"/>
<path d="M418.4,660 Q418,630 426,626 Q434,628 434,650 L432,700 Q428,722 424,720 Q418,705 418.4,685Z" fill="#4a4af0"/>
<path d="M437,500 Q438,491 446,491 L462,492 L462,497 L454,500 L454,598 Q447,600 444,590 Q437,565 437,520Z" fill="#4a4af0"/>
<path d="M443,612 Q447,602 454,600 L454,690 L466,690 L466,705 Q455,712 446,705 Q438,690 438,660Z" fill="#4a4af0"/>
<ellipse cx="425.5" cy="548" rx="5.5" ry="40" fill="#0000f0"/>
<ellipse cx="425.5" cy="672" rx="5.5" ry="42" fill="#0000f0"/>
<ellipse cx="449.5" cy="552" rx="5" ry="44" fill="#0000f0"/>
<ellipse cx="449.5" cy="652" rx="5" ry="46" fill="#0000f0"/>
<ellipse cx="426" cy="541" rx="3.6" ry="26" fill="#0070f0"/>
<ellipse cx="426" cy="672" rx="3.6" ry="30" fill="#0070f0"/>
<ellipse cx="426" cy="541" rx="2.3" ry="20" fill="#00e0e8"/>
<ellipse cx="426" cy="673" rx="2.3" ry="24" fill="#00e0e8"/>
<ellipse cx="449.5" cy="540" rx="4" ry="30" fill="#00c8f0"/>
<ellipse cx="449.5" cy="662" rx="4" ry="32" fill="#00c8f0"/>
<ellipse cx="450" cy="530" rx="3.8" ry="16" fill="#38b040"/>
<ellipse cx="450" cy="673" rx="3.8" ry="16" fill="#38b040"/>
<ellipse cx="450.5" cy="526" rx="3.2" ry="12" fill="#f8e800"/>
<ellipse cx="450.5" cy="677" rx="3.2" ry="12" fill="#f8e800"/>
<ellipse cx="451.5" cy="522" rx="2.2" ry="5" fill="#ff9000"/>
<ellipse cx="451.5" cy="681" rx="2.2" ry="5" fill="#ff9000"/>
</g>

<path d="M430.5,464.6L477.6,446.5M430.6,471.8L477.6,453.7M430.6,479.0L477.7,461.0M430.7,486.2L477.8,468.2M430.7,493.5L477.9,475.4M430.8,500.7L477.9,482.6M430.9,507.9L478.0,489.9M430.9,515.2L478.1,497.1M431.0,522.4L478.1,504.3M431.0,529.6L478.2,511.6M431.1,536.8L478.3,518.8M431.2,544.1L478.4,526.0M431.2,551.3L478.4,533.2M431.3,558.5L478.5,540.5M431.3,565.8L478.6,547.7M431.4,573.0L478.6,554.9M431.4,580.2L478.7,562.1M431.5,587.5L478.8,569.4M431.6,594.7L478.9,576.6M431.6,601.9L478.9,583.8M431.7,609.1L479.0,591.1M431.7,616.4L479.1,598.3M431.8,623.6L479.1,605.5M431.9,630.8L479.2,612.7M431.9,638.1L479.3,620.0M432.0,645.3L479.4,627.2M432.0,652.5L479.4,634.4M432.1,659.8L479.5,641.6M432.2,667.0L479.6,648.9M432.2,674.2L479.6,656.1M432.3,681.4L479.7,663.3M432.3,688.7L479.8,670.6M432.4,695.9L479.9,677.8M432.5,703.1L479.9,685.0M432.5,710.4L480.0,692.2M432.6,717.6L480.1,699.5M432.6,724.8L480.1,706.7M432.7,732.0L480.2,713.9M432.8,739.3L480.3,721.2M434.4,465.0L436.7,740.0M438.4,465.0L440.7,740.0M442.3,465.0L444.7,740.0M446.2,465.0L448.7,740.0M450.2,465.0L452.6,740.0M454.1,465.0L456.6,740.0M458.1,465.0L460.6,740.0M462.0,465.0L464.6,740.0M465.9,465.0L468.5,740.0M469.9,465.0L472.5,740.0M473.8,465.0L476.5,740.0M406.1,470.1L417.8,471.7M406.1,477.3L417.8,478.9M406.2,484.5L417.9,486.1M406.2,491.7L417.9,493.3M406.3,499.0L418.0,500.6M406.3,506.2L418.0,507.8M406.4,513.4L418.1,515.0M406.4,520.6L418.1,522.2M406.5,527.9L418.2,529.5M406.5,535.1L418.2,536.7M406.6,542.3L418.2,543.9M406.6,549.5L418.3,551.1M406.7,556.8L418.3,558.4M406.7,564.0L418.4,565.6M406.8,571.2L418.4,572.8M406.8,578.4L418.5,580.0M406.9,585.7L418.5,587.3M406.9,592.9L418.6,594.5M407.0,600.1L418.6,601.7M407.0,607.3L418.7,608.9M407.1,614.6L418.7,616.2M407.1,621.8L418.8,623.4M407.2,629.0L418.8,630.6M407.2,636.2L418.9,637.8M407.3,643.5L418.9,645.1M407.3,650.7L419.0,652.3M407.4,657.9L419.0,659.5M407.4,665.2L419.0,666.7M407.5,672.4L419.1,673.9M407.5,679.6L419.1,681.2M407.6,686.8L419.2,688.4M407.6,694.1L419.2,695.6M407.7,701.3L419.3,702.8M407.7,708.5L419.3,710.1M407.8,715.7L419.4,717.3M407.8,723.0L419.4,724.5M407.9,730.2L419.5,731.7M407.9,737.4L419.5,739.0M408.0,744.6L419.6,746.2" stroke="#303050" stroke-width="0.6" fill="none" opacity="0.7"/>
<path d="M340.5,294.0L416.7,305.5M429.2,305.5L472.0,288.5M341.0,293.3L386.0,278.5M398.0,277.0L471.0,286.8M338.5,300Q338.5,294 341,293.3M386,278.5Q392,276 398,277M471,286.8Q476,287.5 476.3,292M344.6,1003.4L421.3,1013.5M435.0,1014.0L483.0,995.8" stroke="#111" stroke-width="1.6" fill="none"/>
<path d="M338.3,294.6L344.6,1003.4M476.0,287.5L483.0,995.8" stroke="#000" stroke-width="2.2" fill="none"/>
<path d="M416.7,305.5Q426,308 429.2,305.5M421.3,1013.5Q428,1016.5 435.0,1014.0" stroke="#111" stroke-width="1.4" fill="none"/>
<path d="M416.7,306.0L421.3,1014.0M420.8,306.0L426.2,1014.0M425.8,306.0L431.0,1014.0M429.2,306.0L435.0,1014.0M342.8,296.0L348.6,1004.0M385.8,277.5L385.8,300.7M389.6,277.5L389.6,301.2M394.6,277.5L394.6,301.9M399.2,277.5L399.2,302.6" stroke="#111" stroke-width="1.35" fill="none"/>
<polygon points="438.0,821.0 497.0,799.5 997.5,865.0 937.5,886.0" fill="#d5d5d5" stroke="none" stroke-width="0" />
<path d="M452.8,815.6L952.5,880.8M482.2,804.9L982.5,870.2M469.2,825.1L528.3,803.6M500.4,829.1L559.6,807.7M531.7,833.2L590.8,811.8M562.9,837.2L622.1,815.9M594.1,841.3L653.4,820.0M625.3,845.4L684.7,824.1M656.5,849.4L716.0,828.2M687.8,853.5L747.2,832.2M719.0,857.6L778.5,836.3M750.2,861.6L809.8,840.4M781.4,865.7L841.1,844.5M812.6,869.8L872.4,848.6M843.8,873.8L903.7,852.7M875.1,877.9L934.9,856.8M906.3,881.9L966.2,860.9" stroke="#555" stroke-width="0.6" fill="none"/>
<polygon points="438.0,821.0 497.0,799.5 997.5,865.0 937.5,886.0" fill="none" stroke="#111" stroke-width="1.5" />
<polygon points="466.0,509.3 935.0,570.0 965.0,559.5 967.5,875.5 467.5,810.2" fill="#d5d5d5" stroke="none" stroke-width="0" />
<path d="M500.0,720.0Q498.5,767.2 502.0,814.5M533.0,720.0Q534.5,769.4 535.0,818.8M564.0,521.9Q562.5,672.4 566.0,822.8M593.0,525.6Q594.5,676.1 595.0,826.6M622.0,529.4Q620.5,679.9 624.0,830.4M652.0,533.2Q653.5,683.8 654.0,834.3M683.0,537.2Q681.5,687.8 685.0,838.4M714.5,541.2Q716.0,691.9 716.5,842.5M746.0,545.3Q744.5,695.9 748.0,846.6M777.7,549.3Q779.2,700.0 779.7,850.7M809.0,553.4Q807.5,704.1 811.0,854.8M840.8,557.4Q842.3,708.2 842.8,859.0M872.0,561.4Q870.5,712.2 874.0,863.0M903.8,565.5Q905.3,716.4 905.8,867.2M935.3,569.6Q933.8,720.4 937.3,871.3M466.0,775.0L966.5,840.3M466.0,739.9L966.5,805.2M466.0,704.8L966.5,770.1M466.0,669.7L966.5,735.0M466.0,634.6L966.5,699.9M466.0,599.5L966.5,664.8M466.0,564.4L966.5,629.7M466.0,529.3L966.5,594.6M467.2,705.8L490.8,687.9M467.2,705.8L500.8,720.1M498.0,688.6L500.8,720.1M500.8,720.1L513.7,691.5M516.0,691.5L535.2,718.7M535.2,718.7L542.4,694.3" stroke="#555" stroke-width="0.7" fill="none"/>
<path d="M466.0,509.3L467.5,810.2L967.5,875.5L965.0,559.5" stroke="#111" stroke-width="1.5" fill="none"/>
<polygon points="454.3,519.5 541.2,529.8 542.7,694.5 454.3,683.5" fill="#d5d5d5" stroke="none" stroke-width="0" />
<clipPath id="plateclip"><polygon points="454.3,519.5 541.2,529.8 542.7,694.5 454.3,683.5"/></clipPath>
<path d="M463.0,520.5L463.1,684.6M472.1,521.6L472.4,685.8M480.8,522.6L481.3,686.9M523.8,527.7L525.0,692.3M532.5,528.8L533.9,693.4M454.3,529.8L485.6,533.5M519.5,537.5L541.3,540.1M454.3,540.0L485.7,543.7M519.6,547.8L541.4,550.4M454.3,550.2L485.7,554.0M519.7,558.1L541.5,560.7M454.3,560.5L485.7,564.3M519.8,568.4L541.6,571.0M454.3,570.8L485.8,574.5M519.8,578.6L541.7,581.3M454.3,581.0L485.8,584.8M519.9,588.9L541.8,591.6M454.3,591.2L485.8,595.1M520.0,599.2L541.9,601.9M454.3,601.5L485.9,605.3M520.0,609.5L542.0,612.1M454.3,611.8L485.9,615.6M520.1,619.8L542.0,622.4M454.3,622.0L485.9,625.9M520.2,630.1L542.1,632.7M454.3,632.2L486.0,636.1M520.2,640.3L542.2,643.0M454.3,642.5L486.0,646.4M520.3,650.6L542.3,653.3M454.3,652.8L486.0,656.7M520.4,660.9L542.4,663.6M454.3,663.0L486.1,666.9M520.5,671.2L542.5,673.9M454.3,673.2L486.1,677.2M520.5,681.5L542.6,684.2M509.5,551.5L507.7,557.2L503.5,559.5L499.3,557.2L497.5,551.5L499.3,545.8L503.5,543.5L507.7,545.8ZM515.6,557.1L508.6,565.3L498.6,565.4L491.5,557.4L491.4,545.9L498.4,537.7L508.4,537.6L515.5,545.6ZM509.5,551.5L515.6,557.1M507.7,557.2L508.6,565.3M503.5,559.5L498.6,565.4M499.3,557.2L491.5,557.4M497.5,551.5L491.4,545.9M499.3,545.8L498.4,537.7M503.5,543.5L508.4,537.6M507.7,545.8L515.5,545.6M509.5,606.5L507.7,612.2L503.5,614.5L499.3,612.2L497.5,606.5L499.3,600.8L503.5,598.5L507.7,600.8ZM515.6,612.1L508.6,620.3L498.6,620.4L491.5,612.4L491.4,600.9L498.4,592.7L508.4,592.6L515.5,600.6ZM509.5,606.5L515.6,612.1M507.7,612.2L508.6,620.3M503.5,614.5L498.6,620.4M499.3,612.2L491.5,612.4M497.5,606.5L491.4,600.9M499.3,600.8L498.4,592.7M503.5,598.5L508.4,592.6M507.7,600.8L515.5,600.6M509.5,662.0L507.7,667.7L503.5,670.0L499.3,667.7L497.5,662.0L499.3,656.3L503.5,654.0L507.7,656.3ZM515.6,667.6L508.6,675.8L498.6,675.9L491.5,667.9L491.4,656.4L498.4,648.2L508.4,648.1L515.5,656.1ZM509.5,662.0L515.6,667.6M507.7,667.7L508.6,675.8M503.5,670.0L498.6,675.9M499.3,667.7L491.5,667.9M497.5,662.0L491.4,656.4M499.3,656.3L498.4,648.2M503.5,654.0L508.4,648.1M507.7,656.3L515.5,656.1M486.0,517.5L495.0,513.5L503.5,518.5L512.0,513.5L521.0,517.5L521.0,531.5L512.0,535.5L503.5,530.5L495.0,535.5L486.0,531.5ZM503.5,518.5L503.5,530.5M481.0,522.5L486.0,517.5M481.0,532.5L486.0,531.5M521.0,517.5L525.0,520.5M521.0,531.5L525.0,534.5M486.0,572.0L495.0,568.0L503.5,573.0L512.0,568.0L521.0,572.0L521.0,586.0L512.0,590.0L503.5,585.0L495.0,590.0L486.0,586.0ZM503.5,573.0L503.5,585.0M481.0,577.0L486.0,572.0M481.0,587.0L486.0,586.0M521.0,572.0L525.0,575.0M521.0,586.0L525.0,589.0M486.0,627.0L495.0,623.0L503.5,628.0L512.0,623.0L521.0,627.0L521.0,641.0L512.0,645.0L503.5,640.0L495.0,645.0L486.0,641.0ZM503.5,628.0L503.5,640.0M481.0,632.0L486.0,627.0M481.0,642.0L486.0,641.0M521.0,627.0L525.0,630.0M521.0,641.0L525.0,644.0M486.0,682.0L495.0,678.0L503.5,683.0L512.0,678.0L521.0,682.0L521.0,696.0L512.0,700.0L503.5,695.0L495.0,700.0L486.0,696.0ZM503.5,683.0L503.5,695.0M481.0,687.0L486.0,682.0M481.0,697.0L486.0,696.0M521.0,682.0L525.0,685.0M521.0,696.0L525.0,699.0" stroke="#555" stroke-width="0.7" fill="none" clip-path="url(#plateclip)"/>
<ellipse cx="503.5" cy="551.5" rx="3.8" ry="6.2" fill="#fff" transform="rotate(-18 503.5 551.5)"/>
<ellipse cx="503.5" cy="606.5" rx="3.8" ry="6.2" fill="#fff" transform="rotate(-18 503.5 606.5)"/>
<ellipse cx="503.5" cy="662" rx="3.8" ry="6.2" fill="#fff" transform="rotate(-18 503.5 662)"/>
<path d="M454,520 L470,521 Q474,535 462,546 L454,548Z" fill="#8a8aea"/>
<path d="M454,520 L469,521.5 Q470,532 460,540 L454,541Z" fill="#3a3af0"/>
<path d="M454,520 L466,521 Q467,528 458,534 L454,534Z" fill="#00d0e8"/>
<path d="M454,520 L461,520.8 Q462,525 456,528 L454,528Z" fill="#30b040"/>
<path d="M454,683.5 L470,685.5 Q472,693 462,700 Q456,702 454,700Z" fill="#8a8aea"/>
<path d="M454,683.5 L466,685 Q467,691 459,695 L454,695Z" fill="#00c8e8"/>
<path d="M454.3,519.5L541.2,529.8L542.7,694.5L454.3,683.5" stroke="#111" stroke-width="1.5" fill="none"/>
<path d="M454.3,527V683" stroke="#222" stroke-width="1.1"/>
<rect x="450.5" y="519" width="4" height="9" fill="#e00000"/><rect x="450.5" y="528" width="4" height="8" fill="#2060f0"/><rect x="450.5" y="536" width="4" height="131" fill="#cfcfcf"/>
<rect x="450.5" y="675" width="4" height="9" fill="#e00000"/><rect x="450.5" y="667" width="4" height="8" fill="#2060f0"/>
<path d="M450.5,519V684" stroke="#333" stroke-width="0.8"/>
<polygon points="436.0,505.5 495.0,484.0 995.0,549.0 935.0,570.0" fill="#d5d5d5" stroke="none" stroke-width="0" />
<path d="M450.8,500.1L950.0,564.8M480.2,489.4L980.0,554.2M467.2,509.5L526.2,488.1M498.4,513.6L557.5,492.1M529.6,517.6L588.8,496.2M560.8,521.6L620.0,500.2M591.9,525.7L651.2,504.3M623.1,529.7L682.5,508.4M654.3,533.7L713.8,512.4M685.5,537.8L745.0,516.5M716.7,541.8L776.2,520.6M747.9,545.8L807.5,524.6M779.1,549.8L838.8,528.7M810.2,553.9L870.0,532.8M841.4,557.9L901.2,536.8M872.6,561.9L932.5,540.9M903.8,566.0L963.8,544.9" stroke="#555" stroke-width="0.6" fill="none"/>
<polygon points="436.0,505.5 495.0,484.0 995.0,549.0 935.0,570.0" fill="none" stroke="#111" stroke-width="1.6" />
<path d="M465.5,494.8L965.0,559.5" stroke="#111" stroke-width="1.5"/>
<rect x="987.5" y="654" width="43" height="15" fill="#c8c8c8"/>
<text x="989" y="665.5" font-size="11" font-family="Liberation Sans" fill="#222">-26.000</text>
<path d="M984,683 L993,681 L993,737 L997.5,737 L988.5,757.5 L980,738 L984,738Z" fill="#7fe000" stroke="#222" stroke-width="1"/>
</svg>
<div class="a" style="left:1248px;top:157px;width:670px;height:1px;background:#c4d0d8"></div>
<div class="a" style="left:1248px;top:158px;width:670px;height:25px;background:#f36f21"></div>
<div class="a" style="left:1253px;top:162px;width:69px;height:21px;background:#f0f0f0"></div>
<div class="t" style="left:1266px;top:167px;font-size:11.5px;color:#f36f21">Analysis</div>
<div class="t" style="left:1335px;top:167px;font-size:11.5px;color:#fff">Plates</div>
<div class="t" style="left:1392px;top:167px;font-size:11.5px;color:#fff">Bolts</div>
<div class="t" style="left:1444px;top:167px;font-size:11.5px;color:#fff">Welds</div>
<div class="t" style="left:1264px;top:200.5px;font-size:12.5px;font-weight:bold;color:#f36f21">Status of FE analysis</div>
<div class="a" style="left:1259px;top:217px;width:196px;height:64px;background:#a8a8a8"></div>
<div class="a" style="left:1261px;top:219px;width:192px;height:31px;background:#f0f0f0"></div>
<div class="a" style="left:1261px;top:251px;width:192px;height:28px;background:#e0e0e0"></div>
<div class="a" style="left:1288px;top:219px;width:1px;height:60px;background:#b8b8b8"></div>
<div class="a" style="left:1335px;top:219px;width:1px;height:60px;background:#b8b8b8"></div>
<div class="a" style="left:1378px;top:219px;width:1px;height:60px;background:#b8b8b8"></div>
<div class="a" style="left:1261px;top:250px;width:192px;height:1px;background:#b8b8b8"></div>
<div class="t" style="left:1293px;top:228px;font-size:11.7px;font-weight:bold;color:#333">Status</div>
<div class="t" style="left:1340px;top:228px;font-size:11.7px;font-weight:bold;color:#333">Loads</div>
<div class="t" style="left:1383px;top:228px;font-size:11.7px;font-weight:bold;color:#333">Applied [%]</div>
<svg class="a" style="left:1269px;top:259px" width="8" height="12"><path d="M1.5 1L6 6L1.5 11" fill="none" stroke="#333" stroke-width="1.5"/></svg>
<svg class="a" style="left:1302px;top:256px" width="18" height="18" viewBox="0 0 18 18"><circle cx="9" cy="9" r="8.5" fill="#3cb83c"/><circle cx="9" cy="8" r="7" fill="#5fd05f"/><path d="M5 9.5L8 12.5L13.5 6" fill="none" stroke="#fff" stroke-width="2.2"/></svg>
<div class="t" style="left:1340px;top:259px;font-size:12px;color:#222">LE1</div>
<div class="t" style="left:1383px;top:259px;font-size:12px;color:#222">100.0</div>
<div class="a" style="left:1248px;top:958px;width:670px;height:5px;background:#c8c8c8"></div>
<div class="a" style="left:1251px;top:966px;width:23px;height:23px;background:#f0f0f0;border:1px solid #cfcfcf"></div>
<svg class="a" style="left:1255px;top:970px" width="16" height="16"><g fill="none" stroke="#777" stroke-width="1"><path d="M2 2L6 6M2 2V5M2 2H5M14 2L10 6M14 2V5M14 2H11M2 14L6 10M2 14V11M2 14H5M14 14L10 10M14 14V11M14 14H11"/></g></svg>
<div class="a" style="left:1355px;top:330px;width:450px;height:720px;background:#fff;border:1px solid #f36f21"></div>
<div class="t" style="left:1360px;top:340px;font-size:12px;color:#444">Code and calculation settings</div>
<div class="a" style="left:1685px;top:347px;width:11px;height:2px;background:#3a3a3a"></div>
<div class="a" style="left:1730px;top:341px;width:11px;height:10px;border:1.5px solid #3a3a3a;border-top-width:2.5px"></div>
<svg class="a" style="left:1774px;top:340px" width="13" height="13"><path d="M1.5 1.5L11.5 11.5M11.5 1.5L1.5 11.5" stroke="#3a3a3a" stroke-width="1.8"/></svg>
<div class="a" style="left:1782px;top:366px;width:16px;height:690px;background:#f0f0f0"></div>
<div class="a" style="left:1782px;top:383px;width:16px;height:563px;background:#c8c8c8"></div>
<svg class="a" style="left:1785px;top:370px" width="10" height="7"><path d="M1 6L5 2L9 6" fill="none" stroke="#999" stroke-width="1.2"/></svg>
<div class="tri" style="top:377.0px"></div>
<div class="hdr" style="top:374.5px">Analysis and checks</div>
<div class="row" style="top:401.2px">Stop at limit strain</div>
<div class="chk" style="top:400px"></div>
<div class="row" style="top:423.2px">Geometrical nonlinearity (GMNA)</div>
<div class="chk" style="top:422px"></div>
<div class="row" style="top:445.0px">Detailing</div>
<div class="chk" style="top:444px"></div>
<div class="row" style="top:467.8px">Concrete breakout resistance</div>
<div class="inp" style="top:462px;background:#e6e6e6;padding-left:7px">Both</div>
<svg class="a" style="left:1767px;top:470px" width="8" height="6"><path d="M0 0H8L4 5Z" fill="#111"/></svg>
<div class="row" style="top:491.0px">Local deformation check</div>
<div class="chk" style="top:490px"></div>
<div class="row" style="top:514.0px">Friction coefficient in slip-resistance [-]</div>
<div class="inp" style="top:508px">0.30</div>
<div class="row" style="top:537.0px">Base metal capacity at the fusion face</div>
<div class="chk" style="top:536px"></div>
<div class="tri" style="top:564.2px"></div>
<div class="hdr" style="top:561.8px">Concrete block</div>
<div class="row" style="top:589.5px">Anchor length for stiffness calculation [d]</div>
<div class="inp" style="top:583px">8</div>
<div class="row" style="top:613.2px">Friction coefficient - concrete</div>
<div class="inp" style="top:607px">0.4</div>
<div class="row" style="top:636.2px">Cracked concrete</div>
<div class="chk" style="top:635px"></div>
<svg class="a" style="left:1684px;top:631px" width="16" height="16"><path d="M3.5 9L7 12.5L14 3" fill="none" stroke="#f39a1e" stroke-width="2.2"/></svg>
<div class="tri" style="top:663.2px"></div>
<div class="hdr" style="top:660.8px">LRFD - Resistance factors ϕ</div>
<div class="row" style="top:688.2px">Tensile and shear strength - bolts</div>
<div class="inp" style="top:682px">0.75</div>
<div class="row" style="top:712.2px">Combined tensile and shear strength - bolts</div>
<div class="inp" style="top:706px">0.75</div>
<div class="row" style="top:736.2px">Bearing at bolt holes</div>
<div class="inp" style="top:730px">0.75</div>
<div class="row" style="top:760.2px">Fillet welds</div>
<div class="inp" style="top:754px">0.75</div>
<div class="row" style="top:784.0px">Material resistance factor</div>
<div class="inp" style="top:778px">0.9</div>
<div class="row" style="top:808.2px">Slip resistant joint</div>
<div class="inp" style="top:802px">1</div>
<div class="row" style="top:832.2px">Strength reduction factor for anchors in tension</div>
<div class="inp" style="top:826px">0.7</div>
<div class="row" style="top:856.2px">Strength reduction factor for anchors in shear</div>
<div class="inp" style="top:850px">0.65</div>
<div class="tri" style="top:884.0px"></div>
<div class="hdr" style="top:881.5px">ASD - Safety factors Ω</div>
<div class="row" style="top:910.0px">Tensile and shear strength - bolts</div>
<div class="inp" style="top:904px">2</div>
<div class="row" style="top:934.0px">Combined tensile and shear strength - bolts</div>
<div class="inp" style="top:928px">2</div>
<div class="row" style="top:958.0px">Bearing at bolt holes</div>
<div class="inp" style="top:952px">2</div>
<div class="row" style="top:982.0px">Fillet welds</div>
<div class="inp" style="top:976px">2</div>
<div class="row" style="top:1006.0px">Material safety factor</div>
<div class="inp" style="top:1000px">1.67</div>
<div class="row" style="top:1030.0px">Slip resistant joint</div>
<div class="inp" style="top:1024px">1.5</div>
<svg class="a" style="left:0;top:0" width="1918" height="1047" viewBox="0 0 1918 1047">
 <rect x="509" y="64" width="50" height="74" rx="8" fill="none" stroke="#ff0000" stroke-width="3.8"/>
 <path d="M572.5 144.8L1664 418.8" stroke="#ff0000" stroke-width="4"/>
 <path d="M1655.8 406.6L1664.5 419L1651.2 425.8" fill="none" stroke="#ff0000" stroke-width="4" stroke-linecap="square"/>
 <rect x="1678" y="415" width="26" height="25" rx="7" fill="none" stroke="#ff0000" stroke-width="3.8"/>
</svg>
</body></html>
